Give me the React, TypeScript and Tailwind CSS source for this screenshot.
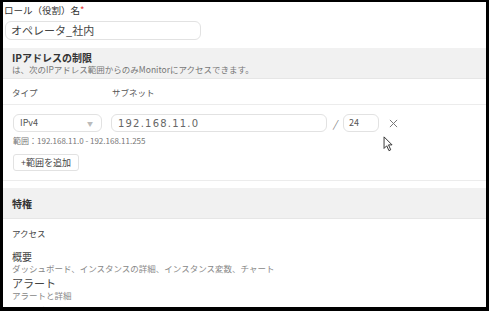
const font = "font-['Noto_Sans_CJK_JP','Noto_Sans',sans-serif]";

function Cursor() {
  return (
    <svg viewBox="0 0 12 18" className="absolute left-[380px] top-[134px] w-[11px] h-[16px]">
      <path d="M1 1 L1 14 L4 11 L6.5 16.5 L8.5 15.5 L6 10 L10 10 Z" fill="white" stroke="#222" strokeWidth={1} strokeLinejoin="round" />
    </svg>
  );
}

export default function App() {
  return (
    <div className={`w-[489px] h-[311px] bg-black pl-[3px] pt-[2px] pr-[3px] pb-[4px] ${font}`}>
      <div className="relative h-full bg-white overflow-hidden text-[#333]">
        {/* Role name */}
        <div className="px-[1px] pt-[1px]">
          <div className="text-[9.5px] leading-[14px] text-[#333]">
            ロール（役割）名<span className="text-[#e53935]">*</span>
          </div>
          <div className="mt-[4px] ml-[1px] w-[196px] h-[19px] rounded-[6px] border border-[#e2e2e2] flex items-center px-[5px] text-[11px] text-[#444]">
            オペレータ_社内
          </div>
        </div>

        {/* IP restriction */}
        <div className="mt-[8px] h-[31px] bg-[#f1f1f1] border-b border-[#e6e6e6] px-[9px] pt-[3px]">
          <div className="text-[10px] leading-[13px] font-bold text-[#333]">IPアドレスの制限</div>
          <div className="text-[8.5px] leading-[11px] text-[#777]">は、次のIPアドレス範囲からのみMonitorにアクセスできます。</div>
        </div>

        <div className="flex px-[9px] pt-[7px] pb-[6px] text-[8.5px] leading-[12px] text-[#555] border-b border-[#ececec]">
          <span className="w-[100px]">タイプ</span>
          <span>サブネット</span>
        </div>

        <div className="px-[10px] pt-[9px]">
          <div className="flex items-center h-[18px]">
            <div className="w-[89px] h-[18px] rounded-[6px] border border-[#e2e2e2] flex items-center justify-between pl-[6px] pr-[8px] text-[9px] text-[#555]">
              <span>IPv4</span>
              <span className="text-[6px] text-[#bbb]">▼</span>
            </div>
            <div className="ml-[9px] w-[216px] h-[18px] rounded-[6px] border border-[#e2e2e2] flex items-center px-[6px] text-[10px] tracking-[1.2px] text-[#666] font-['DejaVu_Sans',sans-serif]">
              192.168.11.0
            </div>
            <span className="ml-[6px] text-[10px] text-[#777] italic">/</span>
            <div className="ml-[6px] w-[36px] h-[18px] rounded-[6px] border border-[#e2e2e2] flex items-center px-[5px] text-[9px] text-[#555]">
              24
            </div>
            <svg viewBox="0 0 10 10" className="ml-[10px] w-[9px] h-[9px]" stroke="#777" strokeWidth={1.1}>
              <path d="M1 1 L9 9 M9 1 L1 9" />
            </svg>
          </div>
          <div className="mt-[3px] text-[8px] leading-[11px] text-[#777]">範囲：192.168.11.0 - 192.168.11.255</div>
          <div className="mt-[8px] w-[66px] h-[17px] rounded-[3px] border border-[#e2e2e2] flex items-center justify-center text-[9px] text-[#444]">
            +範囲を追加
          </div>
        </div>

        <div className="mt-[9px] border-b border-[#ececec]" />

        {/* Privileges */}
        <div className="mt-[7px] h-[31px] bg-[#f1f1f1] border-b border-[#e6e6e6] px-[9px] flex items-center">
          <div className="text-[10px] font-bold text-[#333]">特権</div>
        </div>

        <div className="px-[9px]">
          <div className="mt-[8px] text-[8.5px] leading-[12px] text-[#444]">アクセス</div>
          <div className="mt-[12px] text-[10px] leading-[12px] text-[#444]">概要</div>
          <div className="text-[8.5px] leading-[11px] text-[#888]">ダッシュボード、インスタンスの詳細、インスタンス変数、チャート</div>
          <div className="mt-[2px] text-[11px] leading-[14px] text-[#444]">アラート</div>
          <div className="text-[8.5px] leading-[11px] text-[#888]">アラートと詳細</div>
          <div className="mt-[4px] text-[11px] leading-[14px] text-[#444]">ウェブアプリケーション</div>
        </div>

        <Cursor />
      </div>
    </div>
  );
}
